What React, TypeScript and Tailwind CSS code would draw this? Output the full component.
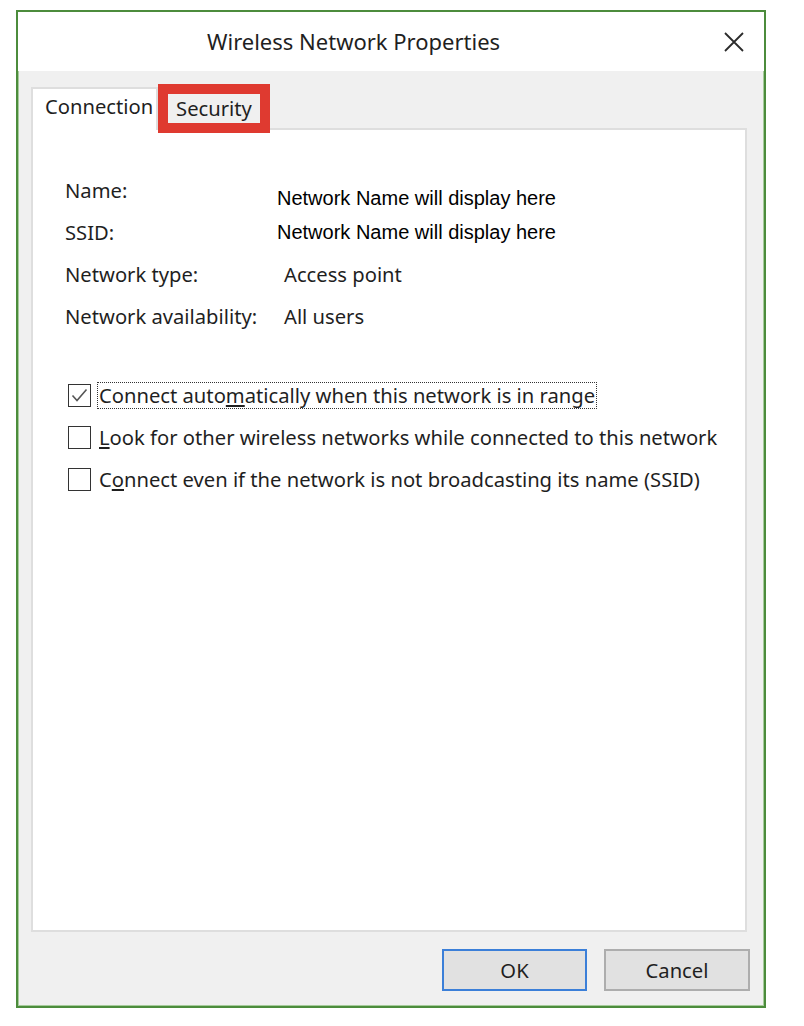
import React from "react";

const ui = "font-['Noto_Sans','Open_Sans',sans-serif]";

const Checkbox: React.FC<{ checked?: boolean }> = ({ checked }) => (
  <div className="flex h-[23px] w-[23px] flex-shrink-0 items-center justify-center border-[1.5px] border-[#333333] bg-white">
    {checked && (
      <svg width="19" height="19" viewBox="0 0 19 19">
        <path d="M2.5 9.5 L7 14.5 L16.5 3.5" fill="none" stroke="#555555" strokeWidth="1.6" />
      </svg>
    )}
  </div>
);

const InfoRow: React.FC<{ label: string; children: React.ReactNode }> = ({ label, children }) => (
  <div className="flex h-[42px] items-center">
    <div className="w-[219px] text-[#1f1f1f]">{label}</div>
    {children}
  </div>
);

export default function App() {
  return (
    <div className="min-h-screen bg-white pl-[16px] pt-[10px]">
      <div
        className={`flex h-[998px] w-[750px] flex-col border-2 border-[#4c8c3c] bg-[#f0f0f0] text-[20.2px] shadow-[inset_0_0_0_1px_#a6cb9b] ${ui}`}
      >
        {/* title bar */}
        <div className="relative flex h-[59px] flex-shrink-0 items-center bg-white pl-[189px]">
          <span className="text-[22px] text-[#1f1f1f]">Wireless Network Properties</span>
          <svg className="absolute right-[20px] top-[20px]" width="20" height="20" viewBox="0 0 20 20">
            <path d="M1 1 L19 19 M19 1 L1 19" stroke="#2b2b2b" strokeWidth="1.8" />
          </svg>
        </div>

        {/* tabs */}
        <div className="flex items-end pl-[13px] pt-[16px]">
          <div className="relative z-10 mb-[-2px] flex h-[43px] w-[127px] items-start border-x-2 border-t-2 border-[#dedede] bg-white pl-[12px] pt-[2px] text-[#1f1f1f]">
            Connection
          </div>
          {/* red highlight drawn round the Security tab */}
          <div className="relative z-20 mb-[5px] ml-[10px] flex h-[29px] w-[92px] items-center justify-center bg-[#f0f0f0] text-[#1f1f1f] outline outline-[10px] outline-[#df3a30]">
            Security
          </div>
        </div>

        {/* panel */}
        <div className="ml-[13px] mr-[17px] flex h-[804px] flex-col border-2 border-[#dedede] bg-white pl-[32px] pt-[39px]">
          <div className="flex h-[42px] items-center">
            <div className="w-[212px] text-[#1f1f1f]">Name:</div>
            <div className="mt-[16px] font-['Liberation_Sans',Arial,sans-serif] text-[20px] text-black">
              Network Name will display here
            </div>
          </div>
          <div className="flex h-[42px] items-center">
            <div className="w-[212px] text-[#1f1f1f]">SSID:</div>
            <div className="font-['Liberation_Sans',Arial,sans-serif] text-[20px] text-black">
              Network Name will display here
            </div>
          </div>
          <InfoRow label="Network type:">
            <span className="text-[#1f1f1f]">Access point</span>
          </InfoRow>
          <InfoRow label="Network availability:">
            <span className="text-[#1f1f1f]">All users</span>
          </InfoRow>

          <div className="mt-[37px] flex flex-col pl-[3px] text-[#1f1f1f]">
            <div className="flex h-[42px] items-center gap-[6px]">
              <Checkbox checked />
              <span className="border border-dotted border-[#333333] px-[1px] leading-[25px]">
                Connect auto<span className="underline">m</span>atically when this network is in range
              </span>
            </div>
            <div className="flex h-[42px] items-center gap-[8px]">
              <Checkbox />
              <span>
                <span className="underline">L</span>ook for other wireless networks while connected to this network
              </span>
            </div>
            <div className="flex h-[42px] items-center gap-[8px]">
              <Checkbox />
              <span>
                C<span className="underline">o</span>nnect even if the network is not broadcasting its name (SSID)
              </span>
            </div>
          </div>
        </div>

        {/* buttons */}
        <div className="flex justify-end gap-[17px] pr-[14px] pt-[17px]">
          <button className="h-[42px] w-[145px] border-2 border-[#3b7fd8] bg-[#e1e1e1] text-[#1f1f1f]">
            OK
          </button>
          <button className="h-[42px] w-[146px] border-2 border-[#adadad] bg-[#e1e1e1] text-[#1f1f1f]">
            Cancel
          </button>
        </div>
      </div>
    </div>
  );
}
